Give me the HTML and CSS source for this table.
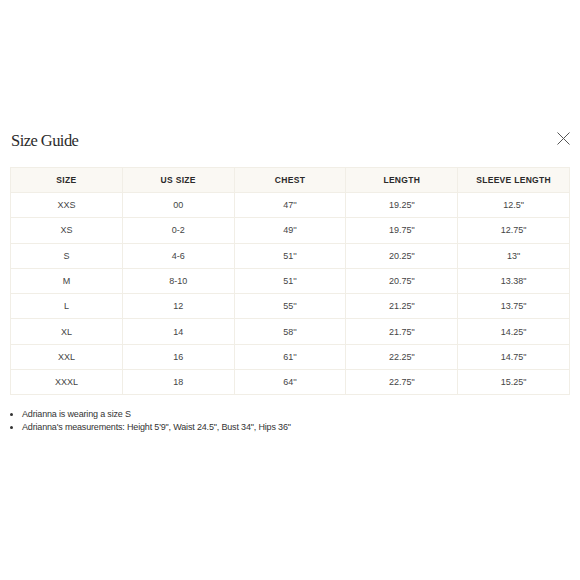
FILE: index.html
```html
<!DOCTYPE html>
<html>
<head>
<meta charset="utf-8">
<link rel="stylesheet" href="styles.css">
</head>
<body>
<div class="modal">
  <div class="head">
    <h2 class="title">Size Guide</h2>
    <button class="close" aria-label="Close">
      <svg width="13" height="13" viewBox="0 0 13 13"><path d="M0.5 0.5L12.5 12.5M12.5 0.5L0.5 12.5" stroke="#555" stroke-width="1" fill="none"/></svg>
    </button>
  </div>
  <table class="sizes">
    <thead>
      <tr><th>Size</th><th>US Size</th><th>Chest</th><th>Length</th><th>Sleeve Length</th></tr>
    </thead>
    <tbody>
      <tr><td>XXS</td><td>00</td><td>47''</td><td>19.25"</td><td>12.5"</td></tr>
      <tr><td>XS</td><td>0-2</td><td>49''</td><td>19.75"</td><td>12.75"</td></tr>
      <tr><td>S</td><td>4-6</td><td>51''</td><td>20.25"</td><td>13"</td></tr>
      <tr><td>M</td><td>8-10</td><td>51''</td><td>20.75"</td><td>13.38"</td></tr>
      <tr><td>L</td><td>12</td><td>55''</td><td>21.25"</td><td>13.75"</td></tr>
      <tr><td>XL</td><td>14</td><td>58''</td><td>21.75"</td><td>14.25"</td></tr>
      <tr><td>XXL</td><td>16</td><td>61''</td><td>22.25"</td><td>14.75"</td></tr>
      <tr><td>XXXL</td><td>18</td><td>64''</td><td>22.75"</td><td>15.25"</td></tr>
    </tbody>
  </table>
  <ul class="notes">
    <li>Adrianna is wearing a size S</li>
    <li>Adrianna's measurements: Height 5'9", Waist 24.5", Bust 34", Hips 36"</li>
  </ul>
</div>
</body>
</html>
```
FILE: styles.css
```css
html, body {
  margin: 0;
  padding: 0;
  background: #fff;
}
body {
  font-family: "Liberation Sans", Arial, sans-serif;
  color: #333;
}
.modal {
  padding: 127px 9px 0 10px;
}
.head {
  display: flex;
  justify-content: space-between;
  align-items: center;
  height: 28px;
  margin-bottom: 12px;
}
.title {
  margin: 0 0 0 1px;
  font-family: "Liberation Serif", "Times New Roman", serif;
  font-weight: 400;
  font-size: 16.5px;
  letter-spacing: -0.55px;
  color: #2b2b2b;
}
.close {
  border: 0;
  background: none;
  padding: 0;
  margin-right: 1px;
  margin-top: -5px;
  width: 13px;
  height: 13px;
  display: flex;
}
.sizes {
  width: 560px;
  border-collapse: collapse;
  table-layout: fixed;
  border: 1px solid #f1eee6;
}
.sizes th, .sizes td {
  border: 1px solid #f1eee6;
  text-align: center;
  font-size: 9px;
  height: 24.3px;
  padding: 0;
}
.sizes th {
  background: #faf8f3;
  text-transform: uppercase;
  font-weight: 700;
  font-size: 8.5px;
  letter-spacing: 0.3px;
  color: #2a2a2a;
  height: 24px;
}
.sizes td {
  color: #444;
}
.notes {
  margin: 13px 0 0 0;
  padding-left: 12px;
  font-size: 9px;
  letter-spacing: -0.17px;
  line-height: 13px;
  color: #333;
}
```
